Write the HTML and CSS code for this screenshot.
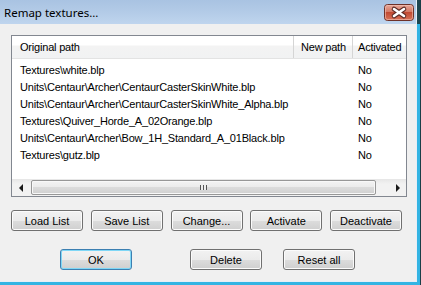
FILE: index.html
```html
<!DOCTYPE html>
<html lang="en">
<head>
    <meta charset="UTF-8">
    <title>Remap textures...</title>
    <link rel="stylesheet" href="styles.css">
</head>
<body>

<div class="frame">
    <div class="window">
        <!-- Title bar -->
        <div class="titlebar">
            <span class="title">Remap textures...</span>
            <span class="close-btn">
                <svg width="30" height="17" viewBox="0 0 30 17">
                    <defs>
                        <linearGradient id="red" x1="0" y1="0" x2="0" y2="1">
                            <stop offset="0" stop-color="#e9a99b"/>
                            <stop offset="0.45" stop-color="#d47a66"/>
                            <stop offset="0.5" stop-color="#c14a32"/>
                            <stop offset="1" stop-color="#d9745a"/>
                        </linearGradient>
                    </defs>
                    <rect x="0.5" y="0.5" width="29" height="16" rx="3" fill="url(#red)" stroke="#6e3128"/>
                    <rect x="1.5" y="1.5" width="27" height="14" rx="2" fill="none" stroke="#f2c4b8" stroke-opacity="0.6"/>
                    <path d="M10 5 L20 12 M20 5 L10 12" stroke="#5b2b24" stroke-width="4.6" stroke-linecap="round"/>
                    <path d="M10 5 L20 12 M20 5 L10 12" stroke="#ffffff" stroke-width="2.6" stroke-linecap="round"/>
                </svg>
            </span>
        </div>

        <div class="client">
            <!-- Texture list -->
            <div class="listview">
                <div class="lv-header">
                    <div class="col col-orig">Original path</div>
                    <div class="col col-new">New path</div>
                    <div class="col col-act">Activated</div>
                </div>
                <div class="lv-body" id="rows">
                    <!-- rows generated below -->
                </div>
                <div class="hscroll">
                    <div class="sb-arrow"><span class="tri-left"></span></div>
                    <div class="sb-track">
                        <div class="sb-thumb"><span class="grip"></span></div>
                    </div>
                    <div class="sb-arrow"><span class="tri-right"></span></div>
                </div>
            </div>

            <!-- List actions -->
            <div class="btn-row">
                <button class="btn">Load List</button>
                <button class="btn">Save List</button>
                <button class="btn">Change...</button>
                <button class="btn">Activate</button>
                <button class="btn">Deactivate</button>
            </div>

            <!-- Dialog actions -->
            <div class="btn-row dialog-row">
                <button class="btn default">OK</button>
                <button class="btn btn-delete">Delete</button>
                <button class="btn btn-reset">Reset all</button>
            </div>
        </div>
    </div>
</div>

<script>
    const textures = [
        { path: 'Textures\\white.blp', newPath: '', active: 'No' },
        { path: 'Units\\Centaur\\Archer\\CentaurCasterSkinWhite.blp', newPath: '', active: 'No' },
        { path: 'Units\\Centaur\\Archer\\CentaurCasterSkinWhite_Alpha.blp', newPath: '', active: 'No' },
        { path: 'Textures\\Quiver_Horde_A_02Orange.blp', newPath: '', active: 'No' },
        { path: 'Units\\Centaur\\Archer\\Bow_1H_Standard_A_01Black.blp', newPath: '', active: 'No' },
        { path: 'Textures\\gutz.blp', newPath: '', active: 'No' },
    ];

    const rows = document.getElementById('rows');
    textures.forEach(t => {
        const row = document.createElement('div');
        row.className = 'lv-row';
        row.innerHTML = `
            <div class="cell col-orig">${t.path}</div>
            <div class="cell col-new">${t.newPath}</div>
            <div class="cell col-act">${t.active}</div>
        `;
        rows.appendChild(row);
    });
</script>

</body>
</html>
```

FILE: styles.css
```css
/* Basic styling */
body {
    margin: 0;
    background-color: #1a3f48;
    font-family: "Liberation Sans", Arial, sans-serif;
    font-size: 11px;
    letter-spacing: -0.2px;
    color: #000;
    overflow: hidden;
}

/* Outer window frame */
.frame {
    width: 417px;
    height: 282px;
    padding: 0 3px 3px 0;
    background: linear-gradient(to bottom, #1d4650 0, #1d4650 24px, #33b4e3 24px);
}
.window {
    width: 416px;
    height: 281px;
    border-right: 1px solid #e6eef7;
    border-bottom: 1px solid #e6eef7;
    background-color: #f0f0f0;
    display: flex;
    flex-direction: column;
}

/* Title bar */
.titlebar {
    height: 24px;
    flex-shrink: 0;
    display: flex;
    justify-content: space-between;
    background: linear-gradient(to bottom, #a9c3e2 0%, #b3cbe7 50%, #bfd5ee 100%);
}
.title {
    font-family: "Noto Sans", "Open Sans", sans-serif;
    font-size: 11.5px;
    letter-spacing: 0;
    line-height: 24px;
    padding-left: 4px;
    padding-top: 1px;
    color: #000;
}
.close-btn { margin: 4px 2px 0 0; height: 17px; }
.close-btn svg { display: block; }

/* Client area */
.client { flex: 1; padding: 11px 0 0 11px; }

/* List view */
.listview {
    width: 394px;
    height: 160px;
    border: 1px solid #828790;
    background-color: #fff;
    display: flex;
    flex-direction: column;
    overflow: hidden;
}
.lv-header {
    height: 22px;
    flex-shrink: 0;
    display: flex;
    border-bottom: 1px solid #e3e3e3;
    background: linear-gradient(to bottom, #ffffff 0, #ffffff 9px, #f3f3f3 10px, #f1f2f3 100%);
}
.col {
    line-height: 22px;
    white-space: nowrap;
    overflow: hidden;
    box-sizing: border-box;
}
.lv-header .col { border-right: 1px solid #d5d5d5; }
.col-orig { width: 282px; padding-left: 8px; flex-shrink: 0; }
.col-new { width: 59px; padding-left: 7px; flex-shrink: 0; }
.col-act { width: 60px; padding-left: 5px; flex-shrink: 0; }
.lv-header .col-act { border-right: none; }

.lv-body { flex: 1; padding-top: 3px; }
.lv-row { display: flex; height: 17px; }
.cell {
    line-height: 17px;
    white-space: nowrap;
    overflow: hidden;
    box-sizing: border-box;
}

/* Horizontal scrollbar */
.hscroll {
    height: 17px;
    flex-shrink: 0;
    display: flex;
    background: linear-gradient(to bottom, #e6e6e6 0%, #f2f2f2 30%, #f2f2f2 100%);
}
.sb-arrow {
    width: 17px;
    display: flex;
    align-items: center;
    justify-content: center;
}
.tri-left {
    width: 0; height: 0;
    border-top: 4px solid transparent;
    border-bottom: 4px solid transparent;
    border-right: 4px solid #1a1a1a;
}
.tri-right {
    width: 0; height: 0;
    border-top: 4px solid transparent;
    border-bottom: 4px solid transparent;
    border-left: 4px solid #1a1a1a;
}
.sb-track { flex: 1; padding: 1px 0 1px 2px; }
.sb-thumb {
    width: 345px;
    height: 15px;
    box-sizing: border-box;
    border: 1px solid #979797;
    border-radius: 2px;
    background: linear-gradient(to bottom, #f3f3f3 0%, #ebebeb 45%, #dbdbdb 50%, #d0d0d0 100%);
    box-shadow: inset 0 0 0 1px #f8f8f8;
    display: flex;
    align-items: center;
    justify-content: center;
}
.grip {
    width: 7px;
    height: 5px;
    background: repeating-linear-gradient(to right, #555 0, #555 1px, #eee 1px, #eee 3px);
}

/* Buttons */
.btn-row {
    width: 391px;
    margin-top: 13px;
    display: flex;
    justify-content: space-between;
}
.btn {
    width: 72px;
    height: 21px;
    padding: 0;
    font-family: "Liberation Sans", Arial, sans-serif;
    font-size: 11px;
    color: #000;
    border: 1px solid #707070;
    border-radius: 3px;
    background: linear-gradient(to bottom, #f2f2f2 0%, #ebebeb 50%, #dddddd 50%, #cfcfcf 100%);
    box-shadow: inset 0 0 0 1px #fbfbfb;
}
.btn.default {
    border-color: #3c7fb1;
    box-shadow: inset 0 0 0 1px #7fd7f6;
}

.dialog-row {
    width: auto;
    margin-top: 18px;
    padding-left: 49px;
    justify-content: flex-start;
}
.btn-delete { margin-left: 58px; }
.btn-reset { margin-left: 21px; }
```
